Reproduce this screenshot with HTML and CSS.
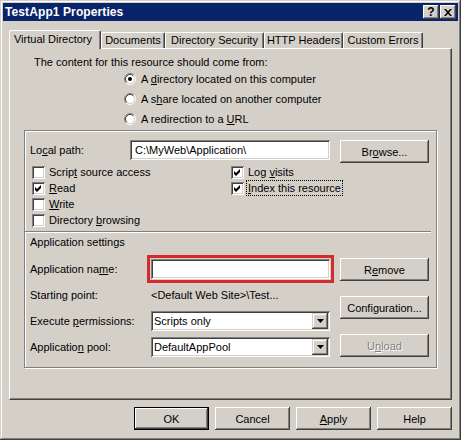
FILE: index.html
```html
<!DOCTYPE html>
<html>
<head>
<meta charset="utf-8">
<title>TestApp1 Properties</title>
<link rel="stylesheet" href="styles.css">
</head>
<body>
<div class="window">
  <div class="titlebar">
    <span class="title">TestApp1 Properties</span>
    <span class="caption-buttons">
      <span class="cap-btn help">?</span>
      <span class="cap-btn close">
        <svg width="8" height="7" viewBox="0 0 8 7"><path d="M0 0h2l2 2.2L6 0h2L5 3.5 8 7H6L4 4.8 2 7H0l3-3.5z" fill="#000"/></svg>
      </span>
    </span>
  </div>

  <div class="client">
    <div class="tabs">
      <div class="tab selected t-vdir">Virtual Directory</div>
      <div class="tab t-docs">Documents</div>
      <div class="tab t-sec">Directory Security</div>
      <div class="tab t-http">HTTP Headers</div>
      <div class="tab t-err">Custom Errors</div>
    </div>

    <div class="panel">
      <p class="intro">The content for this resource should come from:</p>
      <div class="radios">
        <div class="radio">
          <svg class="radio-mark" width="12" height="12" viewBox="0 0 12 12">
            <circle cx="6" cy="6" r="4.5" fill="#fff"/>
            <path d="M2.11 9.89A5.5 5.5 0 0 1 9.89 2.11" fill="none" stroke="#808080"/>
            <path d="M9.89 2.11A5.5 5.5 0 0 1 2.11 9.89" fill="none" stroke="#fff"/>
            <path d="M2.82 9.18A4.5 4.5 0 0 1 9.18 2.82" fill="none" stroke="#404040"/>
            <path d="M9.18 2.82A4.5 4.5 0 0 1 2.82 9.18" fill="none" stroke="#D4D0C8"/>
            <circle cx="6" cy="6" r="2" fill="#000"/>
          </svg>
          <span>A <u>d</u>irectory located on this computer</span>
        </div>
        <div class="radio">
          <svg class="radio-mark" width="12" height="12" viewBox="0 0 12 12">
            <circle cx="6" cy="6" r="4.5" fill="#fff"/>
            <path d="M2.11 9.89A5.5 5.5 0 0 1 9.89 2.11" fill="none" stroke="#808080"/>
            <path d="M9.89 2.11A5.5 5.5 0 0 1 2.11 9.89" fill="none" stroke="#fff"/>
            <path d="M2.82 9.18A4.5 4.5 0 0 1 9.18 2.82" fill="none" stroke="#404040"/>
            <path d="M9.18 2.82A4.5 4.5 0 0 1 2.82 9.18" fill="none" stroke="#D4D0C8"/>
          </svg>
          <span>A s<u>h</u>are located on another computer</span>
        </div>
        <div class="radio">
          <svg class="radio-mark" width="12" height="12" viewBox="0 0 12 12">
            <circle cx="6" cy="6" r="4.5" fill="#fff"/>
            <path d="M2.11 9.89A5.5 5.5 0 0 1 9.89 2.11" fill="none" stroke="#808080"/>
            <path d="M9.89 2.11A5.5 5.5 0 0 1 2.11 9.89" fill="none" stroke="#fff"/>
            <path d="M2.82 9.18A4.5 4.5 0 0 1 9.18 2.82" fill="none" stroke="#404040"/>
            <path d="M9.18 2.82A4.5 4.5 0 0 1 2.82 9.18" fill="none" stroke="#D4D0C8"/>
          </svg>
          <span>A redirection to a <u>U</u>RL</span>
        </div>
      </div>

      <div class="group">
        <div class="path-row">
          <span class="lbl path-lbl">Lo<u>c</u>al path:</span>
          <span class="field path-field">C:\MyWeb\Application\</span>
          <span class="btn side-btn">Br<u>o</u>wse...</span>
        </div>

        <div class="checks">
          <div class="check">
            <span class="box"></span><span class="check-lbl">Scrip<u>t</u> source access</span>
          </div>
          <div class="check">
            <span class="box"><svg width="13" height="13" viewBox="0 0 13 13"><path d="M3 5l2 2 4-4v3l-4 4-2-2z" fill="#000"/></svg></span><span class="check-lbl"><u>R</u>ead</span>
          </div>
          <div class="check">
            <span class="box"></span><span class="check-lbl"><u>W</u>rite</span>
          </div>
          <div class="check">
            <span class="box"></span><span class="check-lbl">Directory <u>b</u>rowsing</span>
          </div>
          <div class="check">
            <span class="box"><svg width="13" height="13" viewBox="0 0 13 13"><path d="M3 5l2 2 4-4v3l-4 4-2-2z" fill="#000"/></svg></span><span class="check-lbl">Log <u>v</u>isits</span>
          </div>
          <div class="check">
            <span class="box"><svg width="13" height="13" viewBox="0 0 13 13"><path d="M3 5l2 2 4-4v3l-4 4-2-2z" fill="#000"/></svg></span><span class="check-lbl focused"><u>I</u>ndex this resource</span>
          </div>
        </div>

        <div class="separator"></div>
        <div class="section-title">Application settings</div>

        <div class="app">
          <div class="app-fields">
            <div class="app-row">
              <span class="lbl app-lbl">Application na<u>m</u>e:</span>
              <span class="field app-field highlighted"></span>
            </div>
            <div class="app-row">
              <span class="lbl app-lbl">Starting point:</span>
              <span class="value">&lt;Default Web Site&gt;\Test...</span>
            </div>
            <div class="app-row">
              <span class="lbl app-lbl">Execute <u>p</u>ermissions:</span>
              <span class="field app-field combo">
                <span class="combo-text">Scripts only</span>
                <span class="drop"><svg width="7" height="4" viewBox="0 0 7 4"><path d="M0 0h7L3.5 4z" fill="#000"/></svg></span>
              </span>
            </div>
            <div class="app-row">
              <span class="lbl app-lbl">Applicatio<u>n</u> pool:</span>
              <span class="field app-field combo">
                <span class="combo-text">DefaultAppPool</span>
                <span class="drop"><svg width="7" height="4" viewBox="0 0 7 4"><path d="M0 0h7L3.5 4z" fill="#000"/></svg></span>
              </span>
            </div>
          </div>
          <div class="app-buttons">
            <span class="btn side-btn">R<u>e</u>move</span>
            <span class="btn side-btn">Confi<u>g</u>uration...</span>
            <span class="btn side-btn disabled">U<u>n</u>load</span>
          </div>
        </div>
      </div>
    </div>

    <div class="footer">
      <span class="btn dlg-btn default">OK</span>
      <span class="btn dlg-btn">Cancel</span>
      <span class="btn dlg-btn"><u>A</u>pply</span>
      <span class="btn dlg-btn">Help</span>
    </div>
  </div>
</div>
</body>
</html>
```

FILE: styles.css
```css
/* Classic Windows property sheet */
* { box-sizing: border-box; }

body {
  margin: 0;
  font: 11px "Liberation Sans", Arial, sans-serif;
  color: #000;
  background: #D4D0C8;
}

u { text-decoration: underline; text-underline-offset: 1px; }

.window {
  width: 461px;
  height: 440px;
  padding: 3px;
  background: #D4D0C8;
  box-shadow: inset -1px -1px #404040, inset 1px 1px #D4D0C8,
              inset -2px -2px #808080, inset 2px 2px #fff;
  display: flex;
  flex-direction: column;
}

/* caption */
.titlebar {
  height: 18px;
  background: #0A246A;
  color: #fff;
  font-weight: bold;
  display: flex;
  align-items: center;
  justify-content: space-between;
  padding: 0 2px;
}

.title { font-size: 12px; letter-spacing: 0.1px; }

.caption-buttons { display: flex; gap: 1px; }

.cap-btn {
  width: 16px;
  height: 14px;
  background: #D4D0C8;
  color: #000;
  display: flex;
  align-items: center;
  justify-content: center;
  box-shadow: inset -1px -1px #404040, inset 1px 1px #fff,
              inset -2px -2px #808080;
}

.cap-btn.help { font-size: 12px; font-weight: bold; line-height: 14px; }

/* client area */
.client {
  flex: 1;
  padding: 9px 6px 0;
  display: flex;
  flex-direction: column;
}

.tabs {
  height: 18px;
  display: flex;
  align-items: flex-end;
}

.tab {
  height: 16px;
  line-height: 15px;
  text-align: center;
  border-top: 1px solid #fff;
  border-left: 1px solid #fff;
  border-right: 1px solid #404040;
  border-radius: 2px 2px 0 0;
  box-shadow: inset -1px 0 #808080;
  background: #D4D0C8;
  white-space: nowrap;
}

.tab.selected {
  height: 19px;
  line-height: 16px;
  margin-bottom: -1px;
  position: relative;
  z-index: 1;
  padding-right: 4px;
}

.t-vdir { width: 92px; }
.t-docs { width: 64px; }
.t-sec  { width: 99px; }
.t-http { width: 79px; }
.t-err  { width: 80px; }

.panel {
  height: 352px;
  border-top: 1px solid #fff;
  border-left: 1px solid #fff;
  border-right: 1px solid #404040;
  border-bottom: 1px solid #404040;
  box-shadow: inset -1px -1px #808080;
  padding: 7px 0 0 14px;
}

.intro {
  margin: 0 0 0 10px;
  line-height: 13px;
}

.radios { margin-left: 100px; }

.radio {
  height: 20px;
  display: flex;
  align-items: center;
  gap: 5px;
}

.radio-mark { flex: none; }

/* frame around the directory settings */
.group {
  margin-top: 1px;
  width: 413px;
  height: 238px;
  border: 1px solid #808080;
  box-shadow: inset 1px 1px #fff, 1px 1px #fff;
  padding-top: 9px;
}

.path-row {
  display: flex;
  align-items: flex-start;
  padding-left: 5px;
  height: 23px;
}

.lbl { line-height: 20px; white-space: nowrap; }

.path-lbl { width: 100px; }

.field {
  background: #fff;
  height: 20px;
  box-shadow: inset 1px 1px #808080, inset -1px -1px #fff,
              inset 2px 2px #404040, inset -2px -2px #D4D0C8;
  line-height: 20px;
  padding-left: 5px;
  white-space: nowrap;
}

.path-field { width: 200px; }

.btn {
  display: flex;
  align-items: center;
  justify-content: center;
  height: 23px;
  background: #D4D0C8;
  box-shadow: inset -1px -1px #404040, inset 1px 1px #fff,
              inset -2px -2px #808080, inset 2px 2px #D4D0C8;
  white-space: nowrap;
}

.side-btn { width: 89px; margin-left: 10px; }

.btn.disabled { color: #808080; text-shadow: 1px 1px 0 #fff; }

/* check boxes */
.checks {
  margin-top: 1px;
  padding-left: 7px;
  display: grid;
  grid-template-columns: 199px 1fr;
  grid-template-rows: repeat(4, 16px);
  grid-auto-flow: column;
}

.check {
  display: flex;
  align-items: center;
  gap: 2px;
}

.box {
  flex: none;
  width: 13px;
  height: 13px;
  background: #fff;
  box-shadow: inset 1px 1px #808080, inset -1px -1px #fff,
              inset 2px 2px #404040, inset -2px -2px #D4D0C8;
}

.box svg { display: block; }

.check-lbl {
  border: 1px solid transparent;
  padding: 0 1px;
  line-height: 14px;
}

.check-lbl.focused { border: 1px dotted #000; }

.separator {
  margin: 3px 5px 0 0;
  height: 2px;
  border-top: 1px solid #808080;
  border-bottom: 1px solid #fff;
}

.section-title {
  margin: 3px 0 0 5px;
  line-height: 13px;
}

/* application settings */
.app {
  margin-top: 7px;
  display: flex;
  align-items: flex-start;
}

.app-fields { padding-left: 5px; width: 305px; }

.app-row {
  height: 26px;
  display: flex;
  align-items: center;
}

.app-lbl { width: 121px; }

.app-field { width: 179px; padding-left: 3px; }

.highlighted {
  outline: 3px solid #D52A2E;
  outline-offset: 1px;
}

.value { white-space: nowrap; }

.combo {
  display: flex;
  align-items: center;
  padding-right: 2px;
}

.combo-text { flex: 1; }

.drop {
  width: 16px;
  height: 16px;
  display: flex;
  align-items: center;
  justify-content: center;
  background: #D4D0C8;
  box-shadow: inset -1px -1px #404040, inset 1px 1px #D4D0C8,
              inset -2px -2px #808080, inset 2px 2px #fff;
}

.drop svg { display: block; }

.app-buttons {
  padding-top: 2px;
  display: flex;
  flex-direction: column;
  gap: 15px;
}

/* dialog buttons */
.footer {
  margin-top: 7px;
  display: flex;
  justify-content: flex-end;
  gap: 6px;
}

.dlg-btn { width: 75px; }

.btn.default {
  box-shadow: inset 0 0 0 1px #000, inset -2px -2px #404040,
              inset 2px 2px #fff, inset -3px -3px #808080;
}
```
